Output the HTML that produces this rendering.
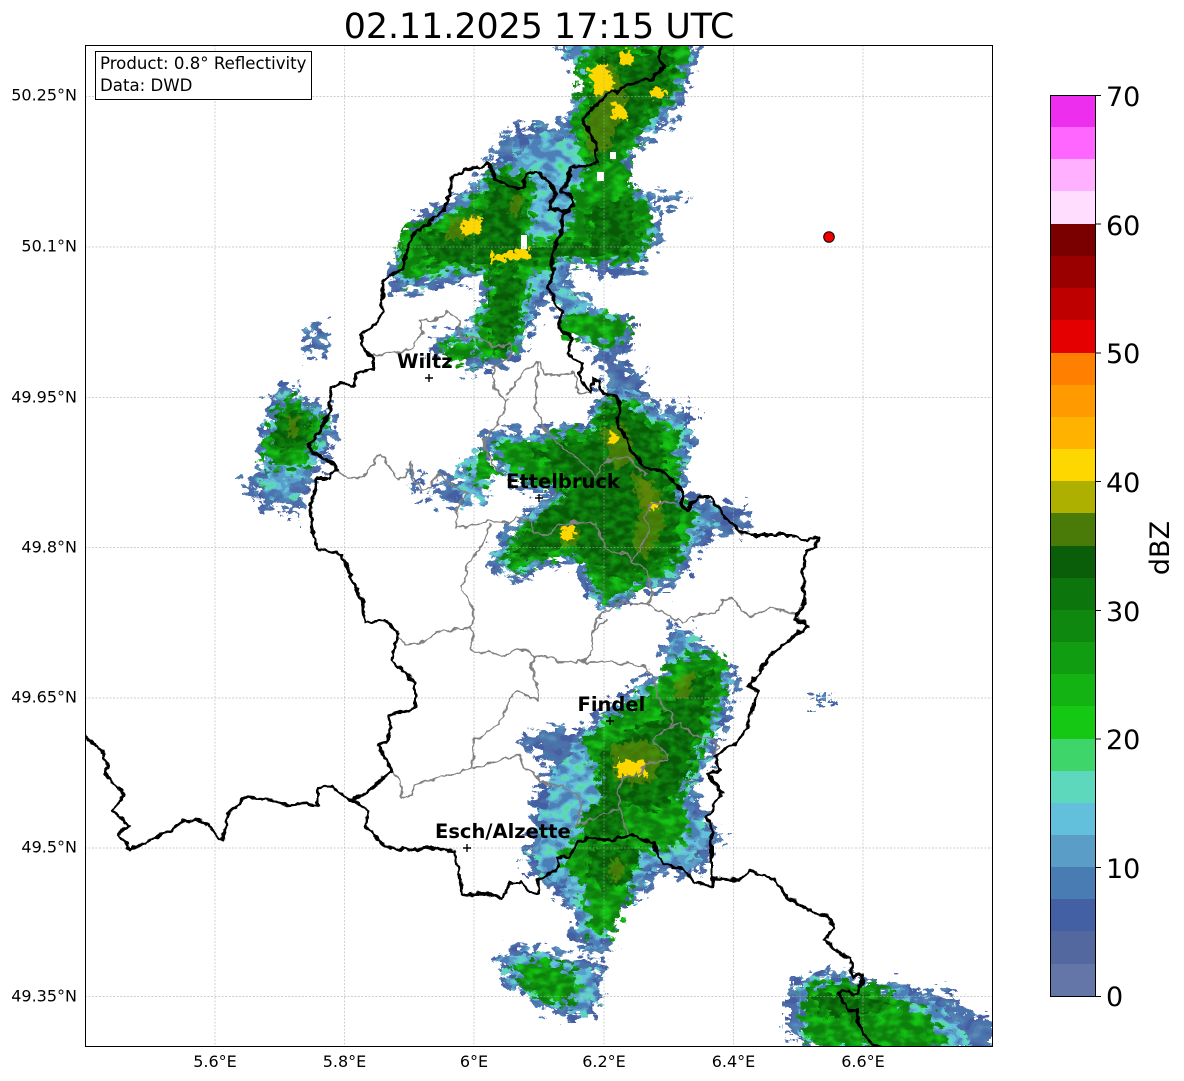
<!DOCTYPE html>
<html>
<head>
<meta charset="utf-8">
<style>
html,body{margin:0;padding:0;background:#fff;width:1184px;height:1081px;overflow:hidden}
svg{display:block}
text{font-family:"DejaVu Sans","Liberation Sans",sans-serif;fill:#000}
.t{font-size:16px}
.c{font-size:27px}
.n{font-size:19.5px;font-weight:bold}
.i{font-size:16.6px}
</style>
</head>
<body>
<svg width="1184" height="1081" viewBox="0 0 1184 1081" xmlns="http://www.w3.org/2000/svg">
<defs>
<clipPath id="ax"><rect x="85" y="45" width="907" height="1001"/></clipPath>
<filter id="fb" x="0" y="0" width="1184" height="1081" filterUnits="userSpaceOnUse" color-interpolation-filters="sRGB">
 <feTurbulence type="fractalNoise" baseFrequency=".09 .13" numOctaves="2" seed="3"/>
 <feColorMatrix type="matrix" values="1 0 0 0 0 0 1 0 0 0 0 0 1 0 0 0 0 0 0 1"/>
 <feComponentTransfer result="d">
  <feFuncR type="discrete" tableValues=".1 .1 .2 .3 .4 .6 .7 .8 .9 .9"/>
  <feFuncG type="discrete" tableValues=".1 .1 .2 .3 .4 .6 .7 .8 .9 .9"/>
 </feComponentTransfer>
 <feDisplacementMap in="SourceGraphic" in2="d" scale="30" xChannelSelector="R" yChannelSelector="G" result="s"/>
 <feTurbulence type="fractalNoise" baseFrequency=".06 .09" numOctaves="2" seed="8" result="n"/>
 <feColorMatrix in="n" type="matrix" values="1 0 0 0 0 1 0 0 0 0 1 0 0 0 0 0 0 0 0 1"/>
 <feComponentTransfer result="p">
  <feFuncR type="discrete" tableValues=".27 .27 .27 .27 .31 .29 .33 .35 .35 .35"/>
  <feFuncG type="discrete" tableValues=".38 .38 .38 .38 .42 .46 .50 .55 .62 .62"/>
  <feFuncB type="discrete" tableValues=".64 .64 .64 .64 .66 .68 .70 .72 .78 .78"/>
 </feComponentTransfer>
 <feComposite in="p" in2="s" operator="in"/>
</filter>
<filter id="ft" x="0" y="0" width="1184" height="1081" filterUnits="userSpaceOnUse" color-interpolation-filters="sRGB">
 <feTurbulence type="fractalNoise" baseFrequency=".1 .14" numOctaves="2" seed="11"/>
 <feColorMatrix type="matrix" values="1 0 0 0 0 0 1 0 0 0 0 0 1 0 0 0 0 0 0 1"/>
 <feComponentTransfer result="d">
  <feFuncR type="discrete" tableValues=".1 .1 .2 .3 .4 .6 .7 .8 .9 .9"/>
  <feFuncG type="discrete" tableValues=".1 .1 .2 .3 .4 .6 .7 .8 .9 .9"/>
 </feComponentTransfer>
 <feDisplacementMap in="SourceGraphic" in2="d" scale="26" xChannelSelector="R" yChannelSelector="G" result="s"/>
 <feTurbulence type="fractalNoise" baseFrequency=".07 .1" numOctaves="2" seed="21" result="n"/>
 <feColorMatrix in="n" type="matrix" values="1 0 0 0 0 1 0 0 0 0 1 0 0 0 0 0 0 0 0 1"/>
 <feComponentTransfer result="p">
  <feFuncR type="discrete" tableValues=".30 .30 .30 .30 .35 .39 .37 .36 .24 .24"/>
  <feFuncG type="discrete" tableValues=".50 .50 .50 .50 .62 .75 .85 .84 .84 .84"/>
  <feFuncB type="discrete" tableValues=".72 .72 .72 .72 .78 .86 .74 .66 .42 .42"/>
 </feComponentTransfer>
 <feComposite in="p" in2="s" operator="in"/>
</filter>
<filter id="fg" x="0" y="0" width="1184" height="1081" filterUnits="userSpaceOnUse" color-interpolation-filters="sRGB">
 <feTurbulence type="fractalNoise" baseFrequency=".1 .14" numOctaves="2" seed="31"/>
 <feColorMatrix type="matrix" values="1 0 0 0 0 0 1 0 0 0 0 0 1 0 0 0 0 0 0 1"/>
 <feComponentTransfer result="d">
  <feFuncR type="discrete" tableValues=".1 .1 .2 .3 .4 .6 .7 .8 .9 .9"/>
  <feFuncG type="discrete" tableValues=".1 .1 .2 .3 .4 .6 .7 .8 .9 .9"/>
 </feComponentTransfer>
 <feDisplacementMap in="SourceGraphic" in2="d" scale="24" xChannelSelector="R" yChannelSelector="G" result="s"/>
 <feTurbulence type="fractalNoise" baseFrequency=".08 .12" numOctaves="2" seed="41" result="n"/>
 <feColorMatrix in="n" type="matrix" values="1 0 0 0 0 1 0 0 0 0 1 0 0 0 0 0 0 0 0 1"/>
 <feComponentTransfer result="p">
  <feFuncR type="discrete" tableValues=".05 .05 .05 .05 .06 .07 .07 .08 .08 .08"/>
  <feFuncG type="discrete" tableValues=".50 .50 .50 .50 .55 .62 .70 .76 .78 .78"/>
  <feFuncB type="discrete" tableValues=".05 .05 .05 .05 .06 .07 .07 .08 .08 .08"/>
 </feComponentTransfer>
 <feComposite in="p" in2="s" operator="in"/>
</filter>
<filter id="fd" x="0" y="0" width="1184" height="1081" filterUnits="userSpaceOnUse" color-interpolation-filters="sRGB">
 <feTurbulence type="fractalNoise" baseFrequency=".1 .14" numOctaves="2" seed="51"/>
 <feColorMatrix type="matrix" values="1 0 0 0 0 0 1 0 0 0 0 0 1 0 0 0 0 0 0 1"/>
 <feComponentTransfer result="d">
  <feFuncR type="discrete" tableValues=".1 .1 .2 .3 .4 .6 .7 .8 .9 .9"/>
  <feFuncG type="discrete" tableValues=".1 .1 .2 .3 .4 .6 .7 .8 .9 .9"/>
 </feComponentTransfer>
 <feDisplacementMap in="SourceGraphic" in2="d" scale="22" xChannelSelector="R" yChannelSelector="G" result="s"/>
 <feTurbulence type="fractalNoise" baseFrequency=".1 .14" numOctaves="2" seed="61" result="n"/>
 <feColorMatrix in="n" type="matrix" values="1 0 0 0 0 1 0 0 0 0 1 0 0 0 0 0 0 0 0 1"/>
 <feComponentTransfer result="p">
  <feFuncR type="discrete" tableValues=".03 .03 .03 .03 .04 .05 .05 .06 .06 .06"/>
  <feFuncG type="discrete" tableValues=".36 .36 .36 .36 .40 .46 .50 .56 .60 .60"/>
  <feFuncB type="discrete" tableValues=".03 .03 .03 .03 .04 .05 .05 .06 .06 .06"/>
 </feComponentTransfer>
 <feComposite in="p" in2="s" operator="in"/>
</filter>
<filter id="fj" x="0" y="0" width="1184" height="1081" filterUnits="userSpaceOnUse" color-interpolation-filters="sRGB">
 <feTurbulence type="fractalNoise" baseFrequency=".2" numOctaves="2" seed="71" result="d"/>
 <feDisplacementMap in="SourceGraphic" in2="d" scale="14" xChannelSelector="R" yChannelSelector="G"/>
</filter>
<filter id="fw" x="0" y="0" width="1184" height="1081" filterUnits="userSpaceOnUse" color-interpolation-filters="sRGB">
 <feTurbulence type="fractalNoise" baseFrequency=".13" numOctaves="2" seed="5"/>
 <feColorMatrix type="matrix" values="1 0 0 0 0 0 1 0 0 0 0 0 1 0 0 0 0 0 0 1" result="d"/>
 <feDisplacementMap in="SourceGraphic" in2="d" scale="7" xChannelSelector="R" yChannelSelector="G"/>
</filter>
</defs>
<rect width="1184" height="1081" fill="#fff"/>

<g clip-path="url(#ax)">
<!-- outer blue echoes -->
<g filter="url(#fb)" fill="#000">
<polygon points="556,40 700,40 692,70 682,105 668,125 630,150 630,190 652,198 658,235 642,272 612,272 600,284 590,267 575,267 565,290 590,300 587,317 632,316 632,345 622,360 640,392 610,392 590,345 560,315 548,292 535,318 527,345 505,367 470,374 460,345 430,357 435,335 470,330 485,300 480,277 440,287 395,292 385,280 400,245 420,213 440,208 470,188 490,160 500,138 530,123 565,125 585,85"/>
<polygon points="660,192 686,194 685,206 660,205"/>
<polygon points="310,325 322,322 328,350 312,358 305,345"/>
<polygon points="278,385 295,385 310,405 332,405 334,425 337,440 320,470 310,480 302,510 296,525 285,505 265,510 245,485 250,470 265,465 260,445 270,410"/>
<polygon points="410,472 418,472 426,498 418,502"/>
<polygon points="430,488 452,476 468,490 460,510 435,498"/>
<polygon points="483,433 503,427 527,437 560,425 587,427 597,397 607,385 607,372 640,372 645,393 667,413 693,403 693,453 683,470 687,500 720,503 747,510 745,530 710,537 687,570 667,590 640,590 617,610 597,610 580,583 580,567 557,560 533,573 513,582 487,563 503,533 527,513 555,490 525,490 497,470 483,450"/>
<polygon points="673,623 693,633 737,673 727,720 710,750 707,770 690,790 713,827 723,840 693,877 653,873 637,907 607,907 613,942 598,957 573,943 572,910 547,887 523,867 530,840 535,793 550,763 517,740 547,727 580,733 597,717 647,677 677,680 660,650 670,633"/>
<polygon points="495,957 515,945 557,953 607,967 600,987 593,1017 563,1017 525,997 503,978"/>
<polygon points="788,985 803,975 845,973 865,985 905,985 915,995 935,990 955,990 960,1010 995,1017 995,1050 815,1050 788,1030"/>
<polygon points="813,696 829,694 829,706 813,706"/>
</g>
<!-- teal band -->
<g filter="url(#ft)" fill="#000">
<polygon points="562,45 690,45 684,75 672,105 660,122 622,148 622,185 650,200 654,235 634,264 605,262 585,262 572,260 560,250 568,285 585,305 620,320 625,345 606,348 580,340 562,305 548,280 530,315 518,345 500,358 475,362 470,345 445,345 475,322 490,295 488,270 440,278 400,284 395,278 405,245 425,222 445,215 475,195 492,170 510,165 520,145 545,130 568,140 575,110 590,85"/>
<polygon points="282,393 298,393 312,412 328,412 328,430 314,462 305,478 290,495 278,502 262,490 256,478 270,472 266,448 274,415"/>
<polygon points="462,458 480,452 492,480 485,498 465,505 458,480"/>
<polygon points="490,440 505,433 528,442 562,431 590,432 600,402 612,392 635,392 660,418 685,415 688,450 677,470 681,505 715,510 722,515 700,530 680,565 660,582 640,582 618,604 602,604 586,580 585,562 558,553 530,566 515,574 495,560 510,535 532,517 565,488 528,484 500,464"/>
<polygon points="680,630 692,640 728,678 720,720 705,750 702,770 684,790 705,825 712,838 690,868 650,865 632,900 612,904 607,940 592,948 580,935 578,905 555,882 530,862 538,838 545,795 558,768 575,745 585,735 600,720 650,685 675,688 668,652"/>
<polygon points="503,958 525,950 555,958 600,970 595,990 588,1012 565,1012 530,995 508,978"/>
<polygon points="803,980 845,977 865,988 905,990 912,1000 940,1005 960,1030 972,1050 815,1050 800,1030"/>
</g>
<!-- bright green -->
<g filter="url(#fg)" fill="#000">
<polygon points="405,230 445,215 478,195 492,170 528,170 535,195 530,240 555,238 552,270 530,275 525,310 515,345 500,362 478,355 478,320 490,295 488,268 440,272 405,282 398,262 400,240"/>
<polygon points="580,60 600,40 690,40 682,75 668,105 640,130 626,160 632,190 650,210 652,235 640,258 600,264 575,258 555,250 555,238 572,228 574,195 590,165 580,150 572,125 580,90"/>
<polygon points="560,318 590,316 628,318 630,340 605,345 585,338 565,338"/>
<polygon points="440,345 470,340 478,360 450,365"/>
<polygon points="282,398 300,398 312,415 330,420 315,440 305,465 290,470 270,470 262,450 270,430"/>
<polygon points="478,452 488,448 495,478 480,485 470,475"/>
<polygon points="495,445 510,440 530,445 565,432 590,433 603,400 625,400 650,420 680,430 680,470 672,500 695,510 700,515 690,530 675,570 650,580 630,590 615,600 600,595 590,575 570,555 545,560 520,570 500,560 515,535 540,515 565,490 530,482 505,465"/>
<polygon points="675,655 720,655 728,680 710,730 695,765 680,795 690,830 675,850 640,850 625,905 612,935 590,935 586,905 582,880 565,870 560,850 580,830 600,800 602,780 580,745 600,725 650,690 660,680"/>
<polygon points="512,962 545,962 575,972 582,990 565,1006 545,1000 522,985"/>
<polygon points="803,985 845,982 895,990 900,1005 930,1012 948,1050 815,1050 803,1030"/>
</g>
<!-- dark core -->
<g filter="url(#fd)" fill="#000">
<polygon points="425,235 450,228 485,210 495,178 522,180 525,200 520,245 490,270 440,262 420,262"/>
<polygon points="490,275 520,265 515,330 500,355 490,340"/>
<polygon points="600,55 672,48 670,90 650,115 625,135 615,160 595,165 585,125 590,90"/>
<polygon points="590,210 630,195 640,235 605,250 590,245"/>
<polygon points="490,250 550,245 640,240 640,250 560,258 500,262"/>
<polygon points="282,410 300,410 310,425 300,445 280,450 272,440"/>
<polygon points="530,455 570,440 595,440 605,410 625,405 660,440 670,490 680,515 670,560 640,575 615,580 595,565 570,545 535,555 515,555 530,525 560,500 580,480 560,470"/>
<polygon points="600,760 625,735 660,720 690,680 712,668 708,710 690,760 680,790 660,810 625,805 600,790"/>
<polygon points="590,850 640,845 632,880 612,890 590,880"/>
<polygon points="583,810 620,795 625,835 590,840"/>
<polygon points="815,990 845,992 875,998 890,1002 870,1015 845,1018 815,1012"/>
</g>
<!-- olive and yellow -->
<g filter="url(#fj)" fill="#6d8a08" fill-opacity=".6">
<polygon points="590,75 612,62 628,100 608,150 590,155 582,125 598,105"/>
<polygon points="288,418 298,418 298,435 288,438"/>
<polygon points="600,430 625,425 635,460 615,470"/>
<polygon points="630,470 660,490 665,525 645,560 632,545 640,510"/>
<polygon points="560,525 580,530 575,548 560,545"/>
<polygon points="610,745 645,740 665,755 650,785 615,780"/>
<polygon points="675,680 695,670 690,695 675,700"/>
<polygon points="450,218 480,215 470,238 445,240"/>
<polygon points="515,195 525,195 518,215 508,212"/>
<polygon points="640,480 652,480 655,510 642,508"/>
<polygon points="610,860 625,860 622,880 610,880"/>
</g>
<g fill="#ffd700" filter="url(#fj)">
<polygon points="587,68 606,64 615,88 596,96"/>
<polygon points="612,103 625,105 628,118 614,120"/>
<polygon points="652,87 664,88 664,98 652,98"/>
<polygon points="620,52 632,50 632,66 620,66"/>
<polygon points="462,220 482,218 482,232 462,234"/>
<polygon points="491,255 530,247 530,258 491,262"/>
<polygon points="562,527 574,528 574,540 562,540"/>
<polygon points="616,760 646,762 646,776 616,776"/>
<polygon points="610,432 618,434 616,444 608,442"/>
<polygon points="650,503 658,503 658,510 650,510"/>
</g>
<g fill="#fff">
<rect x="521" y="235" width="6" height="14"/>
<rect x="597" y="172" width="7" height="9"/>
<rect x="610" y="152" width="6" height="7"/>
</g>
</g>

<!-- grid -->
<g stroke="#a8a8a8" stroke-width="0.7" stroke-dasharray="2 1.5" fill="none" opacity=".75">
<path d="M215 45V1046M344.5 45V1046M474 45V1046M604 45V1046M733.5 45V1046M863 45V1046"/>
<path d="M85 96.5H992M85 247H992M85 397.5H992M85 547.5H992M85 698H992M85 848H992M85 996.5H992"/>
</g>

<g clip-path="url(#ax)" fill="none" stroke-linejoin="round" stroke-linecap="round">
<!-- grey canton borders -->
<g stroke="#808080" stroke-width="1.7" filter="url(#fw)">
<path d="M373 356L383 354 389 350 397 354 413 347 422 333 420 320 427 318 432 322 448 312 460 322 460 338 480 338 493 347 512 343 512 355 493 368 493 387 507 400 500 420 483 440 485 450 497 470"/>
<path d="M507 395L525 370 540 362 545 375 565 375 575 372 578 393 592 394"/>
<path d="M538 362L535 407 547 433 557 442 573 455 588 468 595 477 602 465 613 458 628 457 645 475"/>
<path d="M338 470L348 478 363 477 380 453 397 478 405 478 412 462 413 480 423 490 430 487 438 475 450 483 467 493 457 507 457 528 480 525 488 520 507 523 517 517 532 522 535 533 547 535 560 525 573 523 597 523 603 547 617 553 627 552 632 563 647 570 650 580 653 593 648 605 623 602 595 618 592 640"/>
<path d="M632 563L650 530 645 517 653 503 675 503"/>
<path d="M490 524L488 535 468 565 462 587 473 610 471 628 440 631 425 641 405 645 397 636"/>
<path d="M648 605L683 623 697 615 720 612 722 600 730 598 750 617 770 608 790 612 807 625"/>
<path d="M472 628L472 650 480 653 490 652 505 657 513 650 530 652 535 658 550 657 560 662 583 662 592 650 593 630 607 620"/>
<path d="M583 662L607 662 640 665 650 670 653 678 660 703 673 715 673 723 655 738 655 745 668 755 667 760 647 763 640 773 623 778 618 790 620 808 627 833"/>
<path d="M670 727L680 723 693 735 710 738 718 747 713 757"/>
<path d="M535 658L530 667 538 685 538 700 528 698 518 690 512 695 502 720 480 737 473 740 473 768"/>
<path d="M392 770L400 780 402 798 410 797 415 785 440 777 473 768 490 763 520 755 523 767 537 775 540 783 560 785 580 797 580 810 577 827 593 818 620 808"/>
</g>
<!-- black national borders -->
<g stroke="#000" stroke-width="3" filter="url(#fw)">
<path d="M663 45L658 58 663 67 653 78 627 85 607 95 590 110 583 122 595 142 597 163 570 168 568 182 560 192 572 195 573 205 563 215 560 235 552 253 553 272 548 288 562 315 558 328 572 338 567 353 583 365 580 373 583 383 590 393 593 378 598 380 603 393 618 398 620 410 617 423 622 430 630 450 645 467 663 472 670 478 683 493 682 505 687 512 697 497 710 497 725 517 737 530 750 535 790 535 805 541 818 537 816 546 806 552 803 570 805 600 795 620 808 626 795 635 770 655 755 677 749 685 758 693 747 727 737 743 727 747 715 757 720 770 707 773 722 792 707 817 712 830 712 888 693 880 683 870 663 863 653 843 632 835 613 840 588 838 577 843 568 858 558 857 555 872 538 880 539 894 530 892 522 882 510 883 502 899 492 895 480 893 462 895 460 880 455 852 432 847 410 850 385 847 365 825 368 810 352 800 370 790 392 770 378 745 388 740 390 715 415 708 415 683 392 660 398 632 385 620 365 622 362 600 350 575 342 555 317 548 312 527 310 510 315 492 317 478 329 478 337 470 333 463 312 452 308 447 318 435 330 410 331 388 342 383 354 386 356 374 373 369 373 360 362 345 362 334 377 323 382 310 383 283 390 275 402 270 405 258 412 235 443 212 448 198 453 176 467 170 490 164 495 180 515 189 523 188 527 174 540 174 552 185 555 195 550 208 562 212 573 207"/>
<path d="M85 735L105 755 108 780 125 795 113 810 128 825 118 835 130 850 150 840 170 832 185 820 205 822 222 842 228 815 245 797 270 800 285 805 305 803 318 805 318 788 330 787 352 800"/>
<path d="M712 888L714 878 740 880 750 870 775 880 785 895 808 910 828 917 835 928 825 940 835 950 850 958 853 977 862 975 863 980 855 995 843 990 839 993 843 1003 850 1010 857 1010 858 1023 868 1040 880 1048"/>
</g>
</g>

<!-- city markers -->
<g stroke="#000" stroke-width="1.4" fill="none">
<path d="M425 378h8M429 374v8"/>
<path d="M535 498h8M539 494v8"/>
<path d="M606 721h8M610 717v8"/>
<path d="M463 848h8M467 844v8"/>
</g>
<text class="n" x="397" y="368">Wiltz</text>
<text class="n" x="506" y="488">Ettelbruck</text>
<text class="n" x="577.500" y="711">Findel</text>
<text class="n" x="435" y="838">Esch/Alzette</text>

<circle cx="829" cy="237" r="5.3" fill="#f00000" stroke="#000" stroke-width="1"/>

<!-- axes frame -->
<rect x="85.500" y="45.500" width="907" height="1001" fill="none" stroke="#000" stroke-width="1"/>

<!-- info box -->
<rect x="95.500" y="51.500" width="216" height="48" fill="#fff" stroke="#000" stroke-width="1"/>
<text class="i" x="100" y="69">Product: 0.8° Reflectivity</text>
<text class="i" x="100" y="91">Data: DWD</text>

<!-- title -->
<text x="539" y="38" text-anchor="middle" font-size="34.800">02.11.2025 17:15 UTC</text>

<!-- lat/lon labels -->
<g text-anchor="end">
<text class="t" x="77" y="100.500">50.25°N</text>
<text class="t" x="77" y="251.500">50.1°N</text>
<text class="t" x="77" y="402.500">49.95°N</text>
<text class="t" x="77" y="552.500">49.8°N</text>
<text class="t" x="77" y="702.500">49.65°N</text>
<text class="t" x="77" y="852.500">49.5°N</text>
<text class="t" x="77" y="1001.500">49.35°N</text>
</g>
<g text-anchor="middle">
<text class="t" x="215" y="1067">5.6°E</text>
<text class="t" x="344.500" y="1067">5.8°E</text>
<text class="t" x="474" y="1067">6°E</text>
<text class="t" x="604" y="1067">6.2°E</text>
<text class="t" x="733.500" y="1067">6.4°E</text>
<text class="t" x="863" y="1067">6.6°E</text>
</g>

<!-- colorbar -->
<g shape-rendering="crispEdges">
<rect x="1050.500" y="95" width="45" height="33" fill="#ee2eee"/>
<rect x="1050.500" y="127" width="45" height="33" fill="#ff66ff"/>
<rect x="1050.500" y="159" width="45" height="33" fill="#ffb0ff"/>
<rect x="1050.500" y="191" width="45" height="33" fill="#ffddff"/>
<rect x="1050.500" y="224" width="45" height="33" fill="#7a0000"/>
<rect x="1050.500" y="256" width="45" height="33" fill="#9b0000"/>
<rect x="1050.500" y="288" width="45" height="33" fill="#bf0000"/>
<rect x="1050.500" y="320" width="45" height="33" fill="#e40000"/>
<rect x="1050.500" y="353" width="45" height="33" fill="#ff7f00"/>
<rect x="1050.500" y="385" width="45" height="33" fill="#ff9a00"/>
<rect x="1050.500" y="417" width="45" height="33" fill="#ffb300"/>
<rect x="1050.500" y="449" width="45" height="33" fill="#ffd700"/>
<rect x="1050.500" y="481" width="45" height="33" fill="#aeb000"/>
<rect x="1050.500" y="513" width="45" height="33" fill="#4a7a08"/>
<rect x="1050.500" y="546" width="45" height="33" fill="#0a5e0a"/>
<rect x="1050.500" y="578" width="45" height="33" fill="#0c760c"/>
<rect x="1050.500" y="610" width="45" height="33" fill="#0f880f"/>
<rect x="1050.500" y="642" width="45" height="33" fill="#119d11"/>
<rect x="1050.500" y="674" width="45" height="33" fill="#13b313"/>
<rect x="1050.500" y="706" width="45" height="34" fill="#14c814"/>
<rect x="1050.500" y="739" width="45" height="33" fill="#3ed66a"/>
<rect x="1050.500" y="771" width="45" height="33" fill="#5dd8bc"/>
<rect x="1050.500" y="803" width="45" height="33" fill="#63c0dc"/>
<rect x="1050.500" y="835" width="45" height="33" fill="#5a9ec8"/>
<rect x="1050.500" y="867" width="45" height="33" fill="#4a7cb4"/>
<rect x="1050.500" y="899" width="45" height="33" fill="#4460a4"/>
<rect x="1050.500" y="931" width="45" height="33" fill="#52689f"/>
<rect x="1050.500" y="964" width="45" height="32" fill="#6476a8"/>
</g>
<rect x="1050.500" y="95.500" width="45" height="901" fill="none" stroke="#000" stroke-width="1"/>
<path d="M1095 95.500h6M1095 224h6M1095 353h6M1095 481.500h6M1095 610.500h6M1095 739h6M1095 867.500h6M1095 996.500h6" stroke="#000" stroke-width="1"/>
<g>
<text class="c" x="1106" y="106">70</text>
<text class="c" x="1106" y="235">60</text>
<text class="c" x="1106" y="363">50</text>
<text class="c" x="1106" y="492">40</text>
<text class="c" x="1106" y="621">30</text>
<text class="c" x="1106" y="749">20</text>
<text class="c" x="1106" y="878">10</text>
<text class="c" x="1106" y="1006">0</text>
</g>
<text class="c" transform="translate(1169 548) rotate(-90)" text-anchor="middle">dBZ</text>
</svg>
</body>
</html>
